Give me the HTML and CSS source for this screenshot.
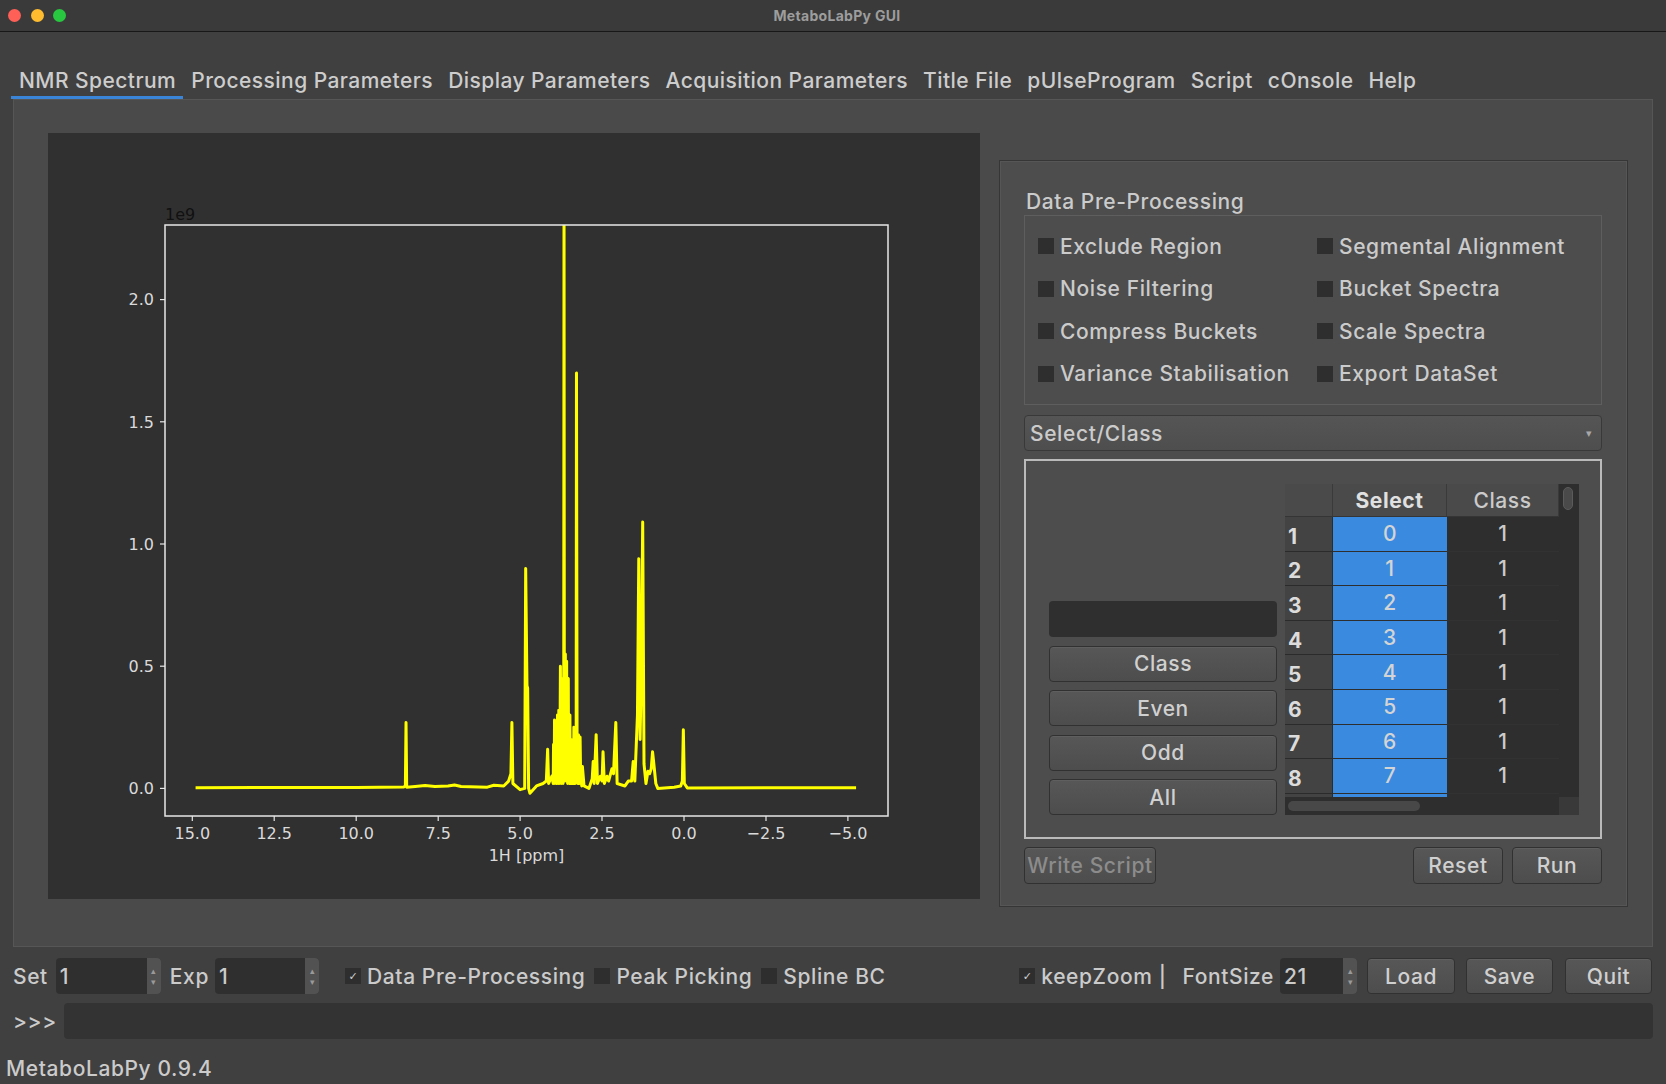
FILE: index.html
```html
<!DOCTYPE html>
<html>
<head>
<meta charset="utf-8">
<title>MetaboLabPy GUI</title>
<link rel="stylesheet" href="styles.css">
</head>
<body>
<div class="window">
  <div class="titlebar">
    <div class="lights">
      <span class="light red"></span><span class="light yellow"></span><span class="light green"></span>
    </div>
    <div class="title">MetaboLabPy GUI</div>
    <div></div>
  </div>
  <div class="tabarea">
    <div class="grip"></div>
    <div class="tabs">
      <div class="tab active">NMR Spectrum</div>
      <div class="tab">Processing Parameters</div>
      <div class="tab">Display Parameters</div>
      <div class="tab">Acquisition Parameters</div>
      <div class="tab">Title File</div>
      <div class="tab">pUlseProgram</div>
      <div class="tab">Script</div>
      <div class="tab">cOnsole</div>
      <div class="tab">Help</div>
    </div>
  </div>
  <div class="pane">
    <div class="canvas">
      <svg class="plot" width="932" height="766" viewBox="0 0 932 766">
        <defs><clipPath id="ax"><rect x="117" y="92" width="723" height="591"/></clipPath></defs>
        <g clip-path="url(#ax)">
          <path class="spec" transform="matrix(-32.78 0 0 -244.4 636 655.4)" vector-effect="non-scaling-stroke" d="M14.9,0.003 L10,0.004 L8.55,0.006 L8.5,0.01 L8.48,0.27 L8.46,0.005 L8.2,0.008 L7.9,0.012 L7.6,0.008 L7.2,0.01 L7.0,0.014 L6.8,0.008 L6.0,0.005 L5.8,0.013 L5.5,0.01 L5.35,0.03 L5.28,0.06 L5.25,0.27 L5.22,0.02 L5.0,-0.005 L4.86,0.0 L4.83,0.9 L4.79,0.42 L4.77,0.41 L4.74,0.0 L4.7,-0.02 L4.5,0.01 L4.3,0.02 L4.2,0.03 L4.16,0.16 L4.13,0.02 L4.03,0.05 L3.99,0.02 L3.98,0.18 L3.96,0.03 L3.95,0.28 L3.94,0.02 L3.93,0.12 L3.92,0.03 L3.9,0.26 L3.89,0.02 L3.88,0.1 L3.87,0.02 L3.86,0.3 L3.85,0.03 L3.84,0.12 L3.83,0.02 L3.82,0.32 L3.81,0.03 L3.8,0.15 L3.79,0.02 L3.77,0.5 L3.76,0.03 L3.75,0.2 L3.74,0.02 L3.73,0.45 L3.72,0.03 L3.7,0.2 L3.69,0.02 L3.68,0.4 L3.67,0.05 L3.66,2.5 L3.65,0.05 L3.64,0.3 L3.63,0.03 L3.62,0.55 L3.61,0.04 L3.6,0.25 L3.59,0.03 L3.58,0.52 L3.57,0.03 L3.56,0.2 L3.55,0.02 L3.53,0.45 L3.52,0.03 L3.51,0.15 L3.5,0.02 L3.48,0.3 L3.47,0.02 L3.46,0.1 L3.45,0.02 L3.44,0.2 L3.43,0.02 L3.42,0.08 L3.41,0.02 L3.4,0.15 L3.39,0.02 L3.38,0.05 L3.37,0.02 L3.36,0.25 L3.35,0.02 L3.33,0.08 L3.32,0.02 L3.3,0.12 L3.29,0.03 L3.28,1.70 L3.26,0.03 L3.25,0.18 L3.24,0.02 L3.22,0.22 L3.21,0.02 L3.2,0.08 L3.19,0.02 L3.17,0.21 L3.15,0.02 L3.14,0.05 L3.12,0.01 L3.1,0.09 L3.05,0.01 L2.9,0.0 L2.8,0.04 L2.77,0.11 L2.74,0.02 L2.68,0.22 L2.64,0.02 L2.55,0.05 L2.5,0.03 L2.47,0.15 L2.43,0.02 L2.35,0.05 L2.3,0.03 L2.2,0.08 L2.15,0.06 L2.08,0.27 L2.04,0.02 L1.8,0.01 L1.7,0.03 L1.6,0.03 L1.55,0.11 L1.5,0.03 L1.42,0.3 L1.38,0.94 L1.34,0.2 L1.3,0.5 L1.26,1.09 L1.22,0.1 L1.16,0.02 L1.1,0.07 L1.05,0.06 L1.0,0.08 L0.96,0.15 L0.92,0.1 L0.86,0.02 L0.8,0.0 L0.3,0.005 L0.1,0.01 L0.05,0.03 L0.02,0.24 L-0.01,0.02 L-0.1,0.002 L-5.25,0.003"/>
        </g>
        <rect class="frame" x="117" y="92" width="723" height="591"/>
        <g class="ticks">
          <line x1="112" y1="655.4" x2="117" y2="655.4"/>
          <line x1="112" y1="533.2" x2="117" y2="533.2"/>
          <line x1="112" y1="411" x2="117" y2="411"/>
          <line x1="112" y1="288.8" x2="117" y2="288.8"/>
          <line x1="112" y1="166.6" x2="117" y2="166.6"/>
          <line x1="144.3" y1="683" x2="144.3" y2="688"/>
          <line x1="226.2" y1="683" x2="226.2" y2="688"/>
          <line x1="308.2" y1="683" x2="308.2" y2="688"/>
          <line x1="390.2" y1="683" x2="390.2" y2="688"/>
          <line x1="472.1" y1="683" x2="472.1" y2="688"/>
          <line x1="554" y1="683" x2="554" y2="688"/>
          <line x1="636" y1="683" x2="636" y2="688"/>
          <line x1="718" y1="683" x2="718" y2="688"/>
          <line x1="799.9" y1="683" x2="799.9" y2="688"/>
        </g>
        <g class="ylab">
          <text x="106" y="661">0.0</text>
          <text x="106" y="539">0.5</text>
          <text x="106" y="417">1.0</text>
          <text x="106" y="295">1.5</text>
          <text x="106" y="172">2.0</text>
        </g>
        <g class="xlab">
          <text x="144.3" y="706">15.0</text>
          <text x="226.2" y="706">12.5</text>
          <text x="308.2" y="706">10.0</text>
          <text x="390.2" y="706">7.5</text>
          <text x="472.1" y="706">5.0</text>
          <text x="554" y="706">2.5</text>
          <text x="636" y="706">0.0</text>
          <text x="718" y="706">−2.5</text>
          <text x="799.9" y="706">−5.0</text>
          <text x="478.5" y="728">1H [ppm]</text>
        </g>
        <text class="expo" x="117" y="87">1e9</text>
      </svg>
    </div>
    <div class="group">
      <div class="gtitle">Data Pre-Processing</div>
      <div class="checkframe">
        <div class="cb"><span class="box"></span>Exclude Region</div>
        <div class="cb"><span class="box"></span>Segmental Alignment</div>
        <div class="cb"><span class="box"></span>Noise Filtering</div>
        <div class="cb"><span class="box"></span>Bucket Spectra</div>
        <div class="cb"><span class="box"></span>Compress Buckets</div>
        <div class="cb"><span class="box"></span>Scale Spectra</div>
        <div class="cb"><span class="box"></span>Variance Stabilisation</div>
        <div class="cb"><span class="box"></span>Export DataSet</div>
      </div>
      <div class="combo"><span>Select/Class</span><span class="caret">▾</span></div>
      <div class="stack">
        <div class="leftcol">
          <div class="lineedit"></div>
          <div class="btn">Class</div>
          <div class="btn">Even</div>
          <div class="btn">Odd</div>
          <div class="btn">All</div>
        </div>
        <div class="table">
          <div class="tview">
            <div class="hc corner-h"></div>
            <div class="hc bold">Select</div>
            <div class="hc">Class</div>
            <div class="rh">1</div><div class="sel">0</div><div class="cls">1</div>
            <div class="rh">2</div><div class="sel">1</div><div class="cls">1</div>
            <div class="rh">3</div><div class="sel">2</div><div class="cls">1</div>
            <div class="rh">4</div><div class="sel">3</div><div class="cls">1</div>
            <div class="rh">5</div><div class="sel">4</div><div class="cls">1</div>
            <div class="rh">6</div><div class="sel">5</div><div class="cls">1</div>
            <div class="rh">7</div><div class="sel">6</div><div class="cls">1</div>
            <div class="rh">8</div><div class="sel">7</div><div class="cls">1</div>
            <div class="rh"></div><div class="sel"></div><div class="cls"></div>
          </div>
          <div class="vs"><div class="vhandle"></div></div>
          <div class="hs"><div class="hhandle"></div></div>
          <div class="corner"></div>
        </div>
      </div>
      <div class="btnrow">
        <div class="btn disabled wscript">Write Script</div>
        <div class="spacer"></div>
        <div class="btn w90">Reset</div>
        <div class="btn w90">Run</div>
      </div>
    </div>
  </div>
  <div class="controls">
    <span>Set</span>
    <div class="spin s1"><span class="val">1</span><span class="arrows"><i>▴</i><i>▾</i></span></div>
    <span class="exp">Exp</span>
    <div class="spin s2"><span class="val">1</span><span class="arrows"><i>▴</i><i>▾</i></span></div>
    <div class="cb bcb first"><span class="box checked">✓</span>Data Pre-Processing</div>
    <div class="cb bcb"><span class="box"></span>Peak Picking</div>
    <div class="cb bcb"><span class="box"></span>Spline BC</div>
    <div class="cb bcb right"><span class="box checked">✓</span>keepZoom |</div>
    <span class="fs">FontSize</span>
    <div class="spin s3"><span class="val">21</span><span class="arrows"><i>▴</i><i>▾</i></span></div>
    <div class="btn bb load">Load</div>
    <div class="btn bb save">Save</div>
    <div class="btn bb quit">Quit</div>
  </div>
  <div class="console">
    <span class="prompt">&gt;&gt;&gt;</span>
    <div class="cinput"></div>
  </div>
  <div class="status">MetaboLabPy 0.9.4</div>
</div>
</body>
</html>
```
FILE: styles.css
```css
* { box-sizing: border-box; }
html, body { margin: 0; padding: 0; }
body {
  width: 1666px;
  height: 1084px;
  overflow: hidden;
  background: #404040;
  font-family: Inter, "Liberation Sans", sans-serif;
  font-size: 21px;
  font-weight: 500;
  letter-spacing: 0.6px;
  color: #cbcbcb;
}
.window { display: flex; flex-direction: column; height: 100%; }

.titlebar {
  height: 32px;
  flex: none;
  display: grid;
  grid-template-columns: 1fr auto 1fr;
  align-items: center;
  background: #3a3a3a;
  border-bottom: 1px solid #181818;
  padding-left: 8px;
}
.lights { display: flex; gap: 9.5px; }
.light { width: 13px; height: 13px; border-radius: 50%; display: block; }
.red { background: #fe5f57; }
.yellow { background: #febc2e; }
.green { background: #28c840; }
.title { font-size: 14px; font-weight: 700; letter-spacing: 0.3px; color: #9d9d9d; }

.tabarea { height: 67px; flex: none; display: flex; flex-direction: column; }
.grip {
  margin: 3px 0 0 3px;
  width: 4px;
  height: 10px;
  background-image: radial-gradient(#7a7a7a 45%, transparent 50%);
  background-size: 2px 2px;
}
.tabs { margin-top: auto; display: flex; padding-left: 11px; }
.tab {
  height: 36px;
  padding: 2px 7px 0 8px;
  display: flex;
  align-items: center;
  border-bottom: 3px solid transparent;
  white-space: nowrap;
  letter-spacing: 0.45px;
  color: #cdcdcd;
}
.tab.active { border-bottom-color: #3b85d9; }

.pane {
  margin: 0 13px;
  height: 848px;
  flex: none;
  background: #4a4a4a;
  border: 1px solid #565656;
  display: flex;
  align-items: flex-start;
  padding: 33px 0 0 34px;
}
.canvas { width: 932px; height: 766px; flex: none; background: #303030; }
.plot { display: block; }
.spec { fill: none; stroke: #ffff00; stroke-width: 3; stroke-linejoin: round; }
.frame { fill: none; stroke: #e6e6e6; stroke-width: 1.5; }
.ticks line { stroke: #e6e6e6; stroke-width: 1.2; }
.ylab text, .xlab text, .expo { font-family: "DejaVu Sans", sans-serif; font-size: 16px; font-weight: 400; letter-spacing: 0; fill: #dadada; }
.ylab text { text-anchor: end; }
.xlab text { text-anchor: middle; }
.expo { fill: #111111; }

.group {
  margin: 27px 0 0 19px;
  width: 629px;
  height: 747px;
  flex: none;
  border: 1px solid #363636;
  box-shadow: inset 0 0 0 1px #565656;
  background: #4d4d4d;
  padding: 0 25px 0 24px;
  display: flex;
  flex-direction: column;
}
.gtitle { margin-top: 29px; height: 24px; line-height: 24px; padding-left: 2px; }
.checkframe {
  margin-top: 1px;
  height: 190px;
  border: 1px solid #5e5e5e;
  display: grid;
  grid-template-columns: 279px 1fr;
  grid-auto-rows: 42.5px;
  padding: 9px 0 0 13px;
}
.cb { display: flex; align-items: center; gap: 6px; white-space: nowrap; }
.box {
  width: 16px;
  height: 16px;
  flex: none;
  background: #2e2e2e;
  display: flex;
  align-items: center;
  justify-content: center;
  font-family: "DejaVu Sans", sans-serif;
  font-size: 11px;
  letter-spacing: 0;
  color: #cfcfcf;
}
.combo {
  margin-top: 10px;
  height: 36px;
  flex: none;
  border: 1px solid #393939;
  border-radius: 4px;
  background: linear-gradient(#555555, #4e4e4e);
  display: flex;
  align-items: center;
  justify-content: space-between;
  padding: 0 8px 0 5px;
}
.caret { font-size: 11px; color: #a8a8a8; }
.stack {
  margin-top: 8px;
  height: 380px;
  flex: none;
  border: 2px solid #bababa;
  display: flex;
  padding: 23px 21px 0 23px;
  gap: 8px;
}
.leftcol {
  width: 228px;
  height: 331px;
  display: flex;
  flex-direction: column;
  justify-content: flex-end;
  gap: 8.5px;
}
.lineedit { height: 36px; background: #2f2f2f; border-radius: 4px; }
.btn {
  height: 36px;
  flex: none;
  border: 1px solid #313131;
  border-radius: 4px;
  background: linear-gradient(#575757, #4d4d4d);
  box-shadow: inset 0 1px 0 #5f5f5f;
  display: flex;
  align-items: center;
  justify-content: center;
  color: #d0d0d0;
  white-space: nowrap;
}
.btn.disabled { color: #8c8c8c; }

.table {
  width: 294px;
  height: 331px;
  display: grid;
  grid-template-columns: 274px 20px;
  grid-template-rows: 313px 18px;
  background: #2e2e2e;
}
.tview {
  overflow: hidden;
  display: grid;
  grid-template-columns: 48px 114px 112px;
  grid-template-rows: 33px;
  grid-auto-rows: 34.6px;
}
.hc {
  background: #4a4a4a;
  border-bottom: 1px solid #353535;
  border-right: 1px solid #3a3a3a;
  display: flex;
  align-items: center;
  justify-content: center;
}
.hc.bold { font-weight: 700; color: #e0e0e0; }
.rh {
  background: #434343;
  border-bottom: 1px solid #2b2b2b;
  border-right: 1px solid #2b2b2b;
  font-weight: 700;
  color: #dcdcdc;
  display: flex;
  align-items: center;
  padding: 5px 0 0 3px;
}
.sel {
  background: #3a8ae0;
  border-bottom: 1px solid #2e2e2e;
  display: flex;
  align-items: center;
  justify-content: center;
  color: #d4d4d4;
}
.cls {
  background: #2e2e2e;
  border-bottom: 1px solid #323232;
  display: flex;
  align-items: center;
  justify-content: center;
}
.vs { background: #2e2e2e; padding: 3px 6px 0 4px; }
.vhandle { width: 10px; height: 23px; border-radius: 5px; background: #4a4a4a; border: 1px solid #5b5b5b; }
.hs { background: #2e2e2e; padding: 4px 3px; }
.hhandle { width: 132px; height: 10px; border-radius: 5px; background: #484848; }
.corner { background: #393939; }

.btnrow { margin-top: 8px; display: flex; height: 37px; gap: 9px; }
.btnrow .btn { height: 37px; }
.wscript { width: 132px; }
.spacer { flex: 1; }
.w90 { width: 90px; }

.controls {
  margin-top: 11px;
  height: 36px;
  flex: none;
  display: flex;
  align-items: center;
  padding: 0 14px 0 13px;
  white-space: nowrap;
}
.spin { height: 36px; background: #2f2f2f; border-radius: 4px; display: flex; flex: none; }
.spin .val { flex: 1; display: flex; align-items: center; padding-left: 4px; }
.spin .arrows {
  width: 14px;
  background: #525252;
  border-radius: 0 4px 4px 0;
  display: flex;
  flex-direction: column;
  justify-content: center;
  align-items: center;
  font-size: 9px;
  line-height: 11px;
  letter-spacing: 0;
  color: #9a9a9a;
}
.spin .arrows i { font-style: normal; }
.s1 { width: 105px; margin-left: 8px; }
.exp { margin-left: 9px; }
.s2 { width: 104px; margin-left: 6px; }
.bcb { margin-left: 9px; }
.bcb.first { margin-left: 26px; }
.bcb.right { margin-left: auto; }
.fs { margin-left: 16px; }
.s3 { width: 77px; margin-left: 6px; }
.bb { width: 88px; }
.load { margin-left: 10px; }
.save { margin-left: 11px; width: 87px; }
.quit { margin-left: 12px; width: 87px; }

.console { margin-top: 9px; height: 36px; flex: none; display: flex; align-items: center; padding: 0 13px; }
.prompt { width: 51px; flex: none; }
.cinput { flex: 1; height: 36px; background: #333333; border-radius: 4px; }
.status { margin-top: 15px; height: 30px; line-height: 30px; padding-left: 6px; flex: none; }
```
